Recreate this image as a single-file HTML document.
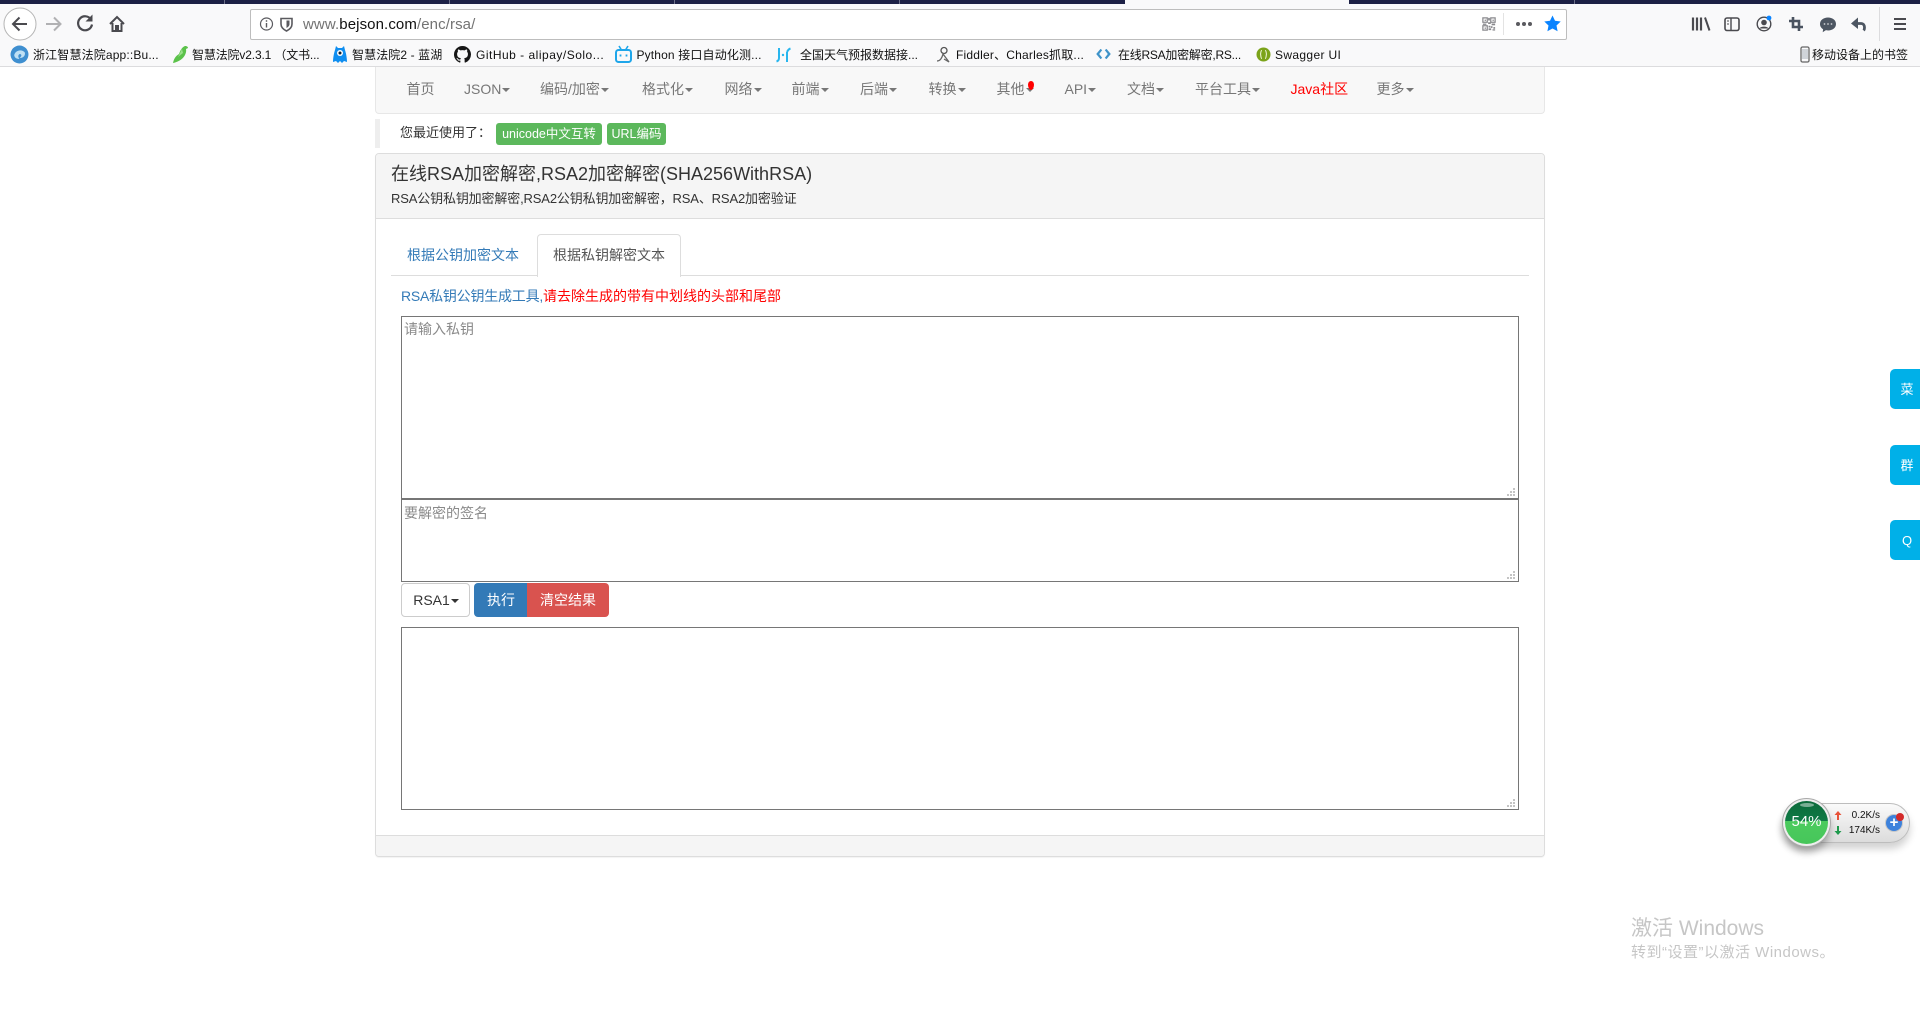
<!DOCTYPE html>
<html lang="zh"><head><meta charset="utf-8"><title>在线RSA加密解密</title>
<style>
html,body{margin:0;padding:0;background:#fff;width:1920px;height:1011px;overflow:hidden}
body{position:relative;font-family:"Liberation Sans","Noto Sans CJK SC",sans-serif;font-size:14px;color:#333}
.a{position:absolute;white-space:nowrap}
.i{position:absolute}
.t{line-height:20px;height:20px}
.bm{position:absolute;top:45px;line-height:20px;height:20px;font-size:12px;color:#111;white-space:nowrap}
.nv{position:absolute;top:79px;line-height:20px;color:#777;white-space:nowrap}
.nv b{display:inline-block;width:0;height:0;border-top:4px solid #777;border-left:4px solid transparent;border-right:4px solid transparent;vertical-align:middle;margin-left:1px;font-size:0}
.ta{position:absolute;left:401px;width:1116px;border:1px solid #767676;background:#fff;box-sizing:content-box}
.ph{position:absolute;left:2px;top:2px;color:#8a8a8a;line-height:20px;font-size:14px;white-space:nowrap}
.grip{position:absolute;right:2px;bottom:1px}
.side{position:absolute;left:1890px;width:30px;height:40px;background:#00b0e8;border-radius:5px 0 0 5px;color:#fff;text-align:center;line-height:42px;font-size:13px;text-indent:4px}
</style></head><body>

<!-- tab strip -->
<div class="i" style="left:0;top:0;width:1920px;height:4px;background:#1c2045"></div>
<div class="i" style="left:224px;top:0;width:1px;height:4px;background:#6b6e88"></div>
<div class="i" style="left:449px;top:0;width:1px;height:4px;background:#6b6e88"></div>
<div class="i" style="left:674px;top:0;width:1px;height:4px;background:#6b6e88"></div>
<div class="i" style="left:899px;top:0;width:1px;height:4px;background:#6b6e88"></div>
<div class="i" style="left:1574px;top:0;width:1px;height:4px;background:#6b6e88"></div>
<div class="i" style="left:1125px;top:0;width:224px;height:4px;background:#f9f9fa"></div>

<!-- toolbar -->
<div class="i" style="left:0;top:4px;width:1920px;height:62px;background:#f9f9fa"></div>
<div class="i" style="left:0;top:66px;width:1920px;height:1px;background:#dcdcde"></div>

<svg class="i" style="left:0;top:4px" width="150" height="38" viewBox="0 0 150 38" fill="none">
<circle cx="20" cy="20" r="16" fill="#fff" stroke="#b5b5b5"/>
<path d="M27 20H13M19.5 13.5L13 20l6.500 6.500" stroke="#4a4a4f" stroke-width="2"/>
<path d="M46 20h14M54 13.500l6.500 6.500-6.500 6.500" stroke="#b1b1b3" stroke-width="2"/>
<path d="M91 15.500A7 7 0 1 0 92 20.500" stroke="#4a4a4f" stroke-width="2.200"/>
<path d="M92.500 10.500v7h-7z" fill="#4a4a4f"/>
<path d="M110 20l7-7 7 7M112.500 19v8h9v-8" stroke="#4a4a4f" stroke-width="2"/>
<rect x="115" y="21" width="4" height="6" fill="#4a4a4f"/>
</svg>

<!-- url bar -->
<div class="i" style="left:250px;top:9px;width:1315px;height:29px;background:#fff;border:1px solid #bdbdbd;border-radius:2px"></div>
<svg class="i" style="left:258px;top:16px" width="38" height="17" viewBox="0 0 38 17" fill="none">
<circle cx="8.500" cy="8" r="6" stroke="#5a5a5f" stroke-width="1.200"/><path d="M8.500 7v4.500M8.500 4.200v1.500" stroke="#5a5a5f" stroke-width="1.400"/>
<path d="M23 2.500h11V8c0 3.500-2.500 5.500-5.500 7C25.500 13.500 23 11.500 23 8z" stroke="#5a5a5f" stroke-width="1.600"/><path d="M28.500 4.500h3V8c0 2-1.500 3-3 4z" fill="#5a5a5f"/>
</svg>
<div class="a" style="left:303px;top:14px;line-height:21px;font-size:15px;letter-spacing:.1px;color:#737373">www.<span style="color:#111">bejson.com</span>/enc/rsa/</div>

<svg class="i" style="left:1482px;top:17px" width="14" height="14" viewBox="0 0 16 16">
<g fill="none" stroke="#88888c" stroke-width="1.400"><rect x="1" y="1" width="5" height="5"/><rect x="10" y="1" width="5" height="5"/><rect x="1" y="10" width="5" height="5"/></g>
<g fill="#88888c"><rect x="3" y="3" width="1.500" height="1.500"/><rect x="12" y="3" width="1.500" height="1.500"/><rect x="3" y="12" width="1.500" height="1.500"/><rect x="7" y="1" width="2" height="3"/><rect x="7" y="6" width="3" height="2"/><rect x="1" y="7.500" width="4" height="1.500"/><rect x="11" y="7.500" width="4" height="2"/><rect x="7.500" y="10" width="2" height="2"/><rect x="10" y="10.500" width="2" height="2"/><rect x="13" y="11.500" width="2" height="2"/><rect x="7.500" y="13" width="3" height="2"/><rect x="12" y="14" width="3" height="1.500"/></g>
</svg>
<div class="i" style="left:1503px;top:13px;width:1px;height:22px;background:#e3e3e3"></div>
<svg class="i" style="left:1515px;top:21px" width="18" height="6"><circle cx="3" cy="3" r="2" fill="#5a5a5f"/><circle cx="9" cy="3" r="2" fill="#5a5a5f"/><circle cx="15" cy="3" r="2" fill="#5a5a5f"/></svg>
<svg class="i" style="left:1544px;top:15px" width="17" height="17" viewBox="0 0 17 17"><path d="M8.500.5l2.500 5.300 5.700.7-4.200 4 1.100 5.800-5.100-2.800-5.100 2.800 1.100-5.800-4.200-4 5.700-.7z" fill="#0a84ff"/></svg>

<!-- right toolbar -->
<svg class="i" style="left:1690px;top:14px" width="222" height="20" viewBox="0 0 222 20" fill="none">
<path d="M3 3.500v13M7 3.500v13M11 3.500v13" stroke="#4a4a4f" stroke-width="2.200"/><path d="M15 3.500l4.500 13" stroke="#4a4a4f" stroke-width="2"/>
<rect x="35" y="4" width="14" height="12.500" rx="2" stroke="#4a4a4f" stroke-width="1.600"/><path d="M41 4v12.500" stroke="#4a4a4f" stroke-width="1.400"/><path d="M37 7h2M37 10h2" stroke="#4a4a4f" stroke-width="1"/>
<circle cx="74" cy="10" r="6.800" stroke="#4a4a4f" stroke-width="1.400"/><circle cx="74" cy="8.500" r="2.800" fill="#4a4a4f"/><path d="M69.500 14.500c1-2.500 8-2.500 9 0" fill="#4a4a4f"/><circle cx="79" cy="4" r="2.400" fill="#0a84ff"/>
<path d="M103 3v10h10M99 7h10v10" stroke="#4a5360" stroke-width="2.600"/>
<path d="M130 10c0-4 3.800-6.500 8-6.500s8 2.500 8 6.500-3.800 6.500-8 6.500c-.8 0-1.700-.1-2.300-.2l-3 2 .4-3.100c-1.900-1.100-3.100-2.900-3.100-5.200z" fill="#4d5662"/>
<g fill="#fff" fill-opacity=".7"><circle cx="134.500" cy="10" r=".9"/><circle cx="138" cy="10" r=".9"/><circle cx="141.500" cy="10" r=".9"/></g>
<path d="M164 9.500h7c2.500 0 3.500 2 3.500 4 0 1.200-.3 2.300-.8 3" stroke="#4d5662" stroke-width="2.800"/><path d="M168 3.500l-7 6 7 5.500z" fill="#4d5662"/>
<path d="M204 5h12M204 10h12M204 15h12" stroke="#4a4a4f" stroke-width="2"/>
</svg>
<div class="i" style="left:1879px;top:7px;width:1px;height:34px;background:#dcdcde"></div>

<!-- bookmarks -->
<svg class="i" style="left:10px;top:45px" width="19" height="19" viewBox="0 0 18 18"><circle cx="9" cy="9" r="8.500" fill="#3f8fd0"/><path d="M4 9.500C5 5 11 3.500 14 7c1 3-2 6-5 5 2-1 2.500-3 .5-3.500C8 8.500 7 11 9 13 6.500 13.500 4 12 4 9.500z" fill="#bfe0f4"/></svg>
<div class="bm" style="left:33px;letter-spacing:.15px">浙江智慧法院app::Bu...</div>
<svg class="i" style="left:172px;top:45px" width="17" height="19" viewBox="0 0 17 19"><path d="M1 18c1-5 3-7 6-9 1-3 3-7 6-8 2 0 3 1 3 2l-2 1c1 5-3 12-13 14z" fill="#5bc24a"/><path d="M6 12l4-8 1 4z" fill="#9be08b"/></svg>
<div class="bm" style="left:192px;letter-spacing:-.15px">智慧法院v2.3.1 （文书...</div>
<svg class="i" style="left:333px;top:45px" width="14" height="19" viewBox="0 0 14 19"><path d="M3 1l2 2h4l2-2 1 4c1 3 2 8 2 12l-3-1-2 2-2-2-2 2-2-2-3 1c0-4 1-9 2-12z" fill="#0f8ef0"/><circle cx="7" cy="8" r="3" fill="#fff"/><circle cx="7" cy="8" r="1.500" fill="#123"/></svg>
<div class="bm" style="left:352px;letter-spacing:.1px">智慧法院2 - 蓝湖</div>
<svg class="i" style="left:454px;top:46px" width="17" height="17" viewBox="0 0 16 16"><path fill="#161616" d="M8 0C3.580 0 0 3.580 0 8c0 3.540 2.290 6.530 5.470 7.590.4.070.55-.17.550-.38 0-.19-.010-.82-.010-1.490-2.010.370-2.530-.49-2.690-.940-.090-.230-.480-.940-.820-1.130-.280-.150-.680-.520-.010-.530.630-.010 1.080.580 1.230.820.720 1.210 1.870.870 2.330.660.070-.520.280-.870.510-1.070-1.780-.200-3.640-.890-3.640-3.950 0-.870.310-1.590.820-2.150-.080-.200-.360-1.020.080-2.120 0 0 .670-.210 2.200.820.640-.180 1.320-.270 2-.270s1.360.090 2 .270c1.530-1.040 2.200-.820 2.200-.820.440 1.100.160 1.920.080 2.120.510.560.820 1.270.820 2.150 0 3.070-1.870 3.750-3.650 3.950.290.250.540.730.540 1.480 0 1.070-.010 1.930-.010 2.200 0 .210.150.460.550.380A8.010 8.010 0 0 0 16 8c0-4.420-3.580-8-8-8z"/></svg>
<div class="bm" style="left:476px;letter-spacing:.5px">GitHub - alipay/Solo...</div>
<svg class="i" style="left:615px;top:45px" width="17" height="18" viewBox="0 0 17 18" fill="none"><rect x="1" y="5" width="15" height="12" rx="2.500" stroke="#1fa6ea" stroke-width="2"/><path d="M4 1l2.500 4M13 1l-2.500 4" stroke="#1fa6ea" stroke-width="1.600"/><path d="M5.500 9.500v2M11.500 9.500v2" stroke="#1fa6ea" stroke-width="1.800"/></svg>
<div class="bm" style="left:636.500px;letter-spacing:.15px">Python 接口自动化测...</div>
<svg class="i" style="left:776px;top:46px" width="15" height="18" viewBox="0 0 15 18" fill="none"><path d="M3 2v10c0 2-1 3-2.500 3.500M11 6c1-2 2-3 3.500-3.500M11 6v10" stroke="#28b6ee" stroke-width="2"/><circle cx="7" cy="9" r="1.200" fill="#28b6ee"/></svg>
<div class="bm" style="left:800px">全国天气预报数据接...</div>
<svg class="i" style="left:936px;top:46px" width="15" height="18" viewBox="0 0 15 18" fill="none"><circle cx="8" cy="4.500" r="3" stroke="#555" stroke-width="1.300"/><path d="M1 15c3 0 5-3 6-7l6 8-5-3" stroke="#666" stroke-width="1.300"/></svg>
<div class="bm" style="left:956px;letter-spacing:.2px">Fiddler、Charles抓取...</div>
<svg class="i" style="left:1096px;top:48px" width="15" height="12" viewBox="0 0 17 14"><path d="M5 1L0 7l5 6 2-1.500L3.500 7 7 2.500zM12 1l5 6-5 6-2-1.500L13.500 7 10 2.500z" fill="#3f93c9"/></svg>
<div class="bm" style="left:1118px;letter-spacing:-.25px">在线RSA加密解密,RS...</div>
<svg class="i" style="left:1256px;top:47px" width="15" height="15" viewBox="0 0 15 15" fill="none"><circle cx="7.500" cy="7.500" r="7" fill="#7ba31a"/><path d="M6 3.500C4.500 3.500 5 6 4.500 7 5 8 4.500 11.500 6 11.500M9 3.500c1.500 0 1 2.500 1.500 3.500-.5 1 0 4.500-1.500 4.500" stroke="#e8f0cf" stroke-width="1.100"/></svg>
<div class="bm" style="left:1275px;letter-spacing:.35px">Swagger UI</div>
<svg class="i" style="left:1800px;top:46px" width="10" height="17" viewBox="0 0 10 17" fill="none"><rect x="1" y="1" width="8" height="15" rx="1.500" stroke="#666" stroke-width="1.300"/><rect x="2" y="3" width="6" height="10" fill="#cfd3d8"/></svg>
<div class="bm" style="left:1812px">移动设备上的书签</div>

<!-- navbar -->
<div class="i" style="left:375px;top:67px;width:1168px;height:46px;background:#f8f8f8;border:1px solid #e7e7e7;border-top:0;border-radius:0 0 4px 4px"></div>
<div class="nv" style="left:406.500px">首页</div>
<div class="nv" style="left:464px">JSON<b></b></div>
<div class="nv" style="left:540px">编码/加密<b></b></div>
<div class="nv" style="left:642px">格式化<b></b></div>
<div class="nv" style="left:724.500px">网络<b></b></div>
<div class="nv" style="left:791.500px">前端<b></b></div>
<div class="nv" style="left:860px">后端<b></b></div>
<div class="nv" style="left:928.500px">转换<b></b></div>
<div class="nv" style="left:996.500px">其他<b></b></div>
<div class="i" style="left:1028px;top:81px;width:6px;height:9px;background:#f00;border-radius:50% 50% 50% 50%/40% 40% 60% 60%"></div>
<div class="nv" style="left:1064.500px">API<b></b></div>
<div class="nv" style="left:1127px">文档<b></b></div>
<div class="nv" style="left:1195px">平台工具<b></b></div>
<div class="nv" style="left:1290.500px;color:#f00">Java社区</div>
<div class="nv" style="left:1376.500px">更多<b></b></div>

<!-- recent -->
<div class="i" style="left:375px;top:119px;width:5px;height:29px;background:#eee"></div>
<div class="a t" style="left:400px;top:123px;font-size:13px;color:#333">您最近使用了：</div>
<div class="a" style="left:496px;top:123px;width:106px;height:22px;line-height:22px;text-align:center;background:#5cb85c;border-radius:3px;color:#fff;font-size:12.500px">unicode中文互转</div>
<div class="a" style="left:607px;top:123px;width:59px;height:22px;line-height:22px;text-align:center;background:#5cb85c;border-radius:3px;color:#fff;font-size:12.500px">URL编码</div>

<!-- panel -->
<div class="i" style="left:375px;top:153px;width:1168px;height:702px;border:1px solid #ddd;border-radius:4px;background:#fff;box-shadow:0 1px 1px rgba(0,0,0,.05)"></div>
<div class="i" style="left:376px;top:154px;width:1168px;height:64px;background:#f5f5f5;border-bottom:1px solid #ddd;border-radius:3px 3px 0 0"></div>
<div class="a" style="left:391px;top:162px;font-size:18px;line-height:24px;color:#333">在线RSA加密解密,RSA2加密解密(SHA256WithRSA)</div>
<div class="a t" style="left:391px;top:189px;color:#333;font-size:13px;letter-spacing:-.15px">RSA公钥私钥加密解密,RSA2公钥私钥加密解密，RSA、RSA2加密验证</div>
<div class="i" style="left:376px;top:835px;width:1168px;height:20px;background:#f5f5f5;border-top:1px solid #ddd;border-radius:0 0 3px 3px"></div>

<!-- tabs -->
<div class="i" style="left:391px;top:275px;width:1138px;height:1px;background:#ddd"></div>
<div class="i" style="left:537px;top:234px;width:142px;height:42px;background:#fff;border:1px solid #ddd;border-bottom:0;border-radius:4px 4px 0 0"></div>
<div class="a t" style="left:407px;top:245px;color:#337ab7">根据公钥加密文本</div>
<div class="a t" style="left:553px;top:245px;color:#555">根据私钥解密文本</div>

<div class="a t" style="left:401px;top:286px"><span style="color:#337ab7;letter-spacing:-.22px">RSA私钥公钥生成工具,</span><span style="color:#f00">请去除生成的带有中划线的头部和尾部</span></div>

<!-- textareas -->
<div class="ta" style="top:316px;height:181px"><div class="ph">请输入私钥</div>
<svg class="grip" width="9" height="9"><g fill="#c4c4c4"><rect x="6" y="0" width="2" height="2"/><rect x="3" y="3" width="2" height="2"/><rect x="6" y="3" width="2" height="2"/><rect x="0" y="6" width="2" height="2"/><rect x="3" y="6" width="2" height="2"/><rect x="6" y="6" width="2" height="2"/></g></svg></div>
<div class="ta" style="top:499px;height:81px"><div class="ph" style="top:3px">要解密的签名</div>
<svg class="grip" width="9" height="9"><g fill="#c4c4c4"><rect x="6" y="0" width="2" height="2"/><rect x="3" y="3" width="2" height="2"/><rect x="6" y="3" width="2" height="2"/><rect x="0" y="6" width="2" height="2"/><rect x="3" y="6" width="2" height="2"/><rect x="6" y="6" width="2" height="2"/></g></svg></div>

<!-- buttons -->
<div class="a" style="left:401px;top:583px;width:67px;height:32px;border:1px solid #ccc;border-radius:4px;background:#fff;line-height:32px;text-align:center;color:#333;text-indent:1px">RSA1<span style="display:inline-block;border-top:4px solid #333;border-left:4px solid transparent;border-right:4px solid transparent;vertical-align:middle;margin-left:1px"></span></div>
<div class="a" style="left:474px;top:583px;width:53px;height:34px;background:#337ab7;border-radius:4px 0 0 4px;line-height:34px;text-align:center;color:#fff;text-indent:1px">执行</div>
<div class="a" style="left:527px;top:583px;width:82px;height:34px;background:#d9534f;border-radius:0 4px 4px 0;line-height:34px;text-align:center;color:#fff">清空结果</div>

<div class="ta" style="top:627px;height:181px">
<svg class="grip" width="9" height="9"><g fill="#c4c4c4"><rect x="6" y="0" width="2" height="2"/><rect x="3" y="3" width="2" height="2"/><rect x="6" y="3" width="2" height="2"/><rect x="0" y="6" width="2" height="2"/><rect x="3" y="6" width="2" height="2"/><rect x="6" y="6" width="2" height="2"/></g></svg></div>

<!-- side -->
<div class="side" style="top:369px">菜</div>
<div class="side" style="top:445px">群</div>
<div class="side" style="top:520px">Q</div>

<!-- widget -->
<div class="i" style="left:1782px;top:803px;width:126px;height:38px;border-radius:20px;background:linear-gradient(#fafafa,#dcdcdc);border:1px solid #bdbdbd;box-shadow:0 6px 8px rgba(0,0,0,.18)"></div>
<div class="i" style="left:1783px;top:799px;width:47px;height:47px;border-radius:50%;background:#eee;box-shadow:0 0 0 1px #aaa,0 6px 8px rgba(0,0,0,.3)"></div>
<div class="i" style="left:1785px;top:801px;width:43px;height:43px;border-radius:50%;background:linear-gradient(#0b6a3a 0,#0f7a45 46%,#4ccb5e 47%,#46c65a 100%)"></div>
<div class="i" style="left:1800px;top:803px;width:14px;height:4px;border-radius:50%;background:rgba(255,255,255,.45)"></div>
<div class="a" style="left:1785px;top:812px;width:43px;text-align:center;color:#fff;font-size:15px;line-height:20px">54%</div>
<svg class="i" style="left:1832px;top:809px" width="12" height="28" viewBox="0 0 12 28"><path d="M6 2L2.500 6H5v5h2V6h2.500z" fill="#e8533a"/><path d="M6 26l3.500-4H7v-5H5v5H2.500z" fill="#1f9a4d"/></svg>
<div class="a" style="left:1840px;top:809px;width:40px;text-align:right;font-size:10px;line-height:14px;color:#111">0.2K/s</div>
<div class="a" style="left:1840px;top:824px;width:40px;text-align:right;font-size:10px;line-height:14px;color:#111">174K/s</div>
<div class="i" style="left:1886px;top:815px;width:16px;height:16px;border-radius:50%;background:#3d82dc;box-shadow:0 0 0 1px #c8c8c8"></div>
<div class="a" style="left:1886px;top:814px;width:16px;text-align:center;color:#fff;font-size:15px;font-weight:bold;line-height:18px">+</div>
<div class="i" style="left:1896px;top:813px;width:8px;height:8px;border-radius:50%;background:#d32a2a"></div>

<!-- watermark -->
<div class="a" style="left:1631px;top:916px;font-size:21px;line-height:26px;color:#c6c6c6">激活 Windows</div>
<div class="a" style="left:1631px;top:943px;font-size:15px;line-height:20px;letter-spacing:.5px;color:#c6c6c6">转到“设置”以激活 Windows。</div>
</body></html>
